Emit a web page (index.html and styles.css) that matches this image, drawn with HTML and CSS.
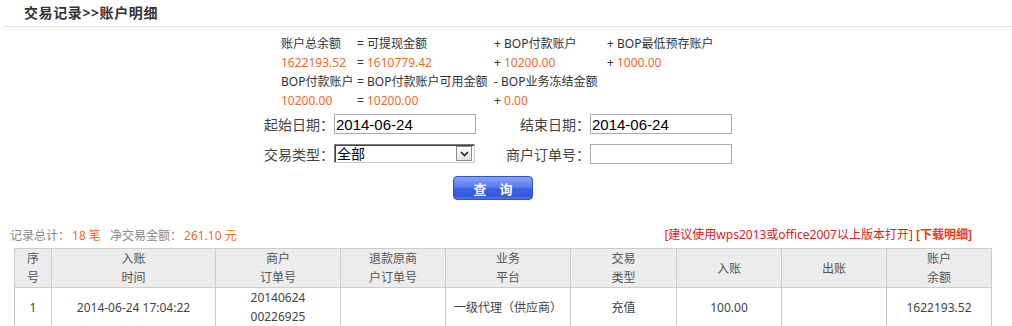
FILE: index.html
```html
<!DOCTYPE html>
<html lang="zh-CN">

<head>
  <meta charset="UTF-8">
  <title>账户明细</title>
  <link rel="stylesheet" href="styles.css">
</head>

<body>
  <div class="crumb">交易记录&gt;&gt;账户明细</div>

  <div class="summary">
    <span>账户总余额</span><span>= 可提现金额</span><span>+ BOP付款账户</span><span>+ BOP最低预存账户</span>
    <span class="num">1622193.52</span><span>= <em class="num">1610779.42</em></span><span>+ <em class="num">10200.00</em></span><span>+ <em class="num">1000.00</em></span>
    <span>BOP付款账户</span><span>= BOP付款账户可用金额</span><span>- BOP业务冻结金额</span><span></span>
    <span class="num">10200.00</span><span>= <em class="num">10200.00</em></span><span>+ <em class="num">0.00</em></span><span></span>
  </div>

  <form class="query" id="queryForm">
    <label for="startDate">起始日期：</label>
    <input type="text" id="startDate" value="2014-06-24">
    <label for="endDate">结束日期：</label>
    <input type="text" id="endDate" value="2014-06-24">

    <label for="tradeType">交易类型：</label>
    <div class="select-wrap">
      <select id="tradeType">
        <option>全部</option>
        <option>充值</option>
        <option>消费</option>
      </select>
      <span class="select-arrow">
        <svg width="9" height="6" viewBox="0 0 9 6"><path d="M1 1 L4.5 4.5 L8 1" fill="none" stroke="#222" stroke-width="1.6"/></svg>
      </span>
    </div>
    <label for="orderNo">商户订单号：</label>
    <input type="text" id="orderNo">

    <div class="btn-row"><button type="submit">查询</button></div>
  </form>

  <div class="stats">
    <div>
      <span class="lbl">记录总计：</span><span class="val">18 笔</span>
      <span class="gap"></span><span class="lbl">净交易金额：</span><span class="val">261.10 元</span>
    </div>
    <div class="tips">[建议使用wps2013或office2007以上版本打开] <a href="#" class="download">[下载明细]</a></div>
  </div>

  <table class="records">
    <colgroup>
      <col style="width:37px">
      <col style="width:164px">
      <col style="width:125px">
      <col style="width:105px">
      <col style="width:125px">
      <col style="width:106px">
      <col style="width:105px">
      <col style="width:105px">
      <col style="width:105px">
    </colgroup>
    <tr>
      <th>序<br>号</th>
      <th>入账<br>时间</th>
      <th>商户<br>订单号</th>
      <th>退款原商<br>户订单号</th>
      <th>业务<br>平台</th>
      <th>交易<br>类型</th>
      <th>入账</th>
      <th>出账</th>
      <th>账户<br>余额</th>
    </tr>
    <tr>
      <td>1</td>
      <td>2014-06-24 17:04:22</td>
      <td>20140624<br>00226925</td>
      <td></td>
      <td>一级代理（供应商）</td>
      <td>充值</td>
      <td>100.00</td>
      <td></td>
      <td>1622193.52</td>
    </tr>
  </table>

  <script>
    document.getElementById('queryForm').addEventListener('submit', function (event) {
      event.preventDefault();
    });
  </script>
</body>

</html>
```

FILE: styles.css
```css
body {
  margin: 0;
  font-family: "Noto Sans", "Noto Sans CJK SC", sans-serif;
  font-size: 12px;
  color: #333;
  background: #fff;
}

.crumb {
  margin-left: 4px;
  padding-left: 20px;
  height: 26px;
  line-height: 26px;
  border-bottom: 1px solid #e3e3e3;
  font-size: 14px;
  font-weight: bold;
  letter-spacing: 0.6px;
  color: #333;
}

/* 余额公式 */
.summary {
  display: grid;
  grid-template-columns: 76px 137px 113px 140px;
  margin: 7px 0 0 281px;
  line-height: 19px;
  color: #333;
}

.summary em {
  font-style: normal;
}

.num {
  color: #f2692b;
}

/* 查询条件 */
.query {
  display: grid;
  grid-template-columns: 84px 142px 114px 142px;
  grid-auto-rows: 20px;
  row-gap: 10px;
  width: 482px;
  margin: 4px 0 0 250px;
}

.query label {
  text-align: right;
  font-family: "Noto Sans CJK SC", sans-serif;
  font-size: 14px;
  line-height: 20px;
  color: #444;
}

.query input[type="text"] {
  box-sizing: border-box;
  width: 142px;
  height: 20px;
  margin: 0;
  padding: 0 1px;
  border: 1px solid #a5acb2;
  font-family: "Liberation Sans", Arial, sans-serif;
  font-size: 15px;
  color: #000;
}

.select-wrap {
  position: relative;
  width: 141px;
  height: 19px;
}

.select-wrap select {
  -webkit-appearance: none;
  appearance: none;
  box-sizing: border-box;
  width: 100%;
  height: 100%;
  margin: 0;
  padding: 0 0 0 2px;
  border: 1px solid #7a7a7a;
  border-right-color: #c8c8c8;
  border-bottom-color: #c8c8c8;
  box-shadow: inset 1px 1px 0 #444;
  background: #fff;
  font-family: "Noto Sans CJK SC", sans-serif;
  font-size: 14px;
  line-height: 17px;
  color: #000;
  border-radius: 0;
}

.select-arrow {
  position: absolute;
  top: 2px;
  right: 3px;
  box-sizing: border-box;
  width: 16px;
  height: 15px;
  border: 1px solid #8c8c8c;
  background: linear-gradient(#fdfdfd, #e2e2e2);
  display: flex;
  align-items: center;
  justify-content: center;
  pointer-events: none;
}

.btn-row {
  grid-column: 1 / -1;
  display: flex;
  justify-content: center;
  padding-left: 4px;
  margin-top: 2px;
}

.btn-row button {
  width: 80px;
  height: 24px;
  padding: 0 0 0 13px;
  border: 1px solid #3552c8;
  border-radius: 4px;
  background: linear-gradient(#86a2f6 0%, #5a7cf0 45%, #3a5ee6 55%, #3458de 85%, #5374e6 100%);
  color: #fff;
  font-family: "Noto Sans CJK SC", sans-serif;
  font-size: 13px;
  font-weight: bold;
  letter-spacing: 13px;
  cursor: pointer;
}

/* 统计行 */
.stats {
  display: flex;
  justify-content: space-between;
  margin-top: 31px;
  padding: 0 40px 0 10px;
  line-height: 20px;
  color: #888;
}

.stats .lbl {
  font-family: "Noto Sans CJK SC", sans-serif;
}

.stats .val {
  margin-left: 2px;
  color: #f2692b;
}

.stats .gap {
  display: inline-block;
  width: 6px;
}

.tips {
  color: #e02020;
}

.download {
  color: #f23a14;
  font-weight: bold;
  text-decoration: none;
}

/* 明细表格 */
.records {
  border-collapse: collapse;
  table-layout: fixed;
  width: 977px;
  margin: 2px 0 0 14px;
}

.records th,
.records td {
  padding: 0;
  border: 1px solid #ccc;
  text-align: center;
  line-height: 19px;
}

.records th {
  height: 38px;
  background: #ececec;
  font-weight: normal;
  color: #555;
}

.records td {
  height: 38px;
  color: #444;
}
```
